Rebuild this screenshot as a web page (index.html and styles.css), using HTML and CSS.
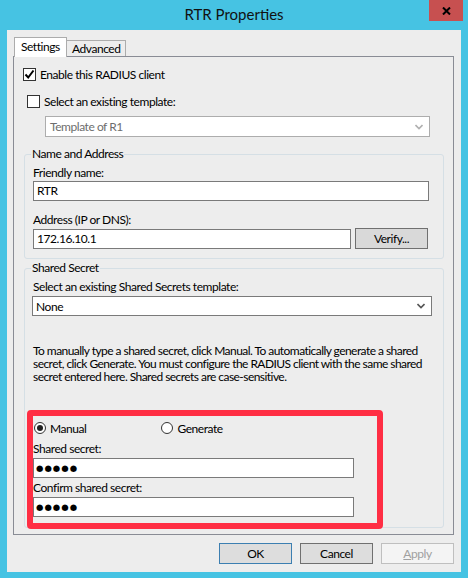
FILE: index.html
```html
<!DOCTYPE html>
<html>
<head>
<meta charset="utf-8">
<title>RTR Properties</title>
<link rel="stylesheet" href="styles.css">
</head>
<body>
<div class="titlebar">
  <div></div>
  <div class="title">RTR Properties</div>
  <div class="close"><svg width="9" height="8" viewBox="0 0 9 8"><path d="M1 0.5 L8 7.5 M8 0.5 L1 7.5" stroke="#000" stroke-width="2"/></svg></div>
</div>
<div class="dialog">
  <div class="tabs">
    <div class="tab active">Settings</div>
    <div class="tab">Advanced</div>
  </div>
  <div class="panel">
    <div class="check row1"><span class="box"><svg width="11" height="11" viewBox="0 0 11 11"><path d="M1.5 5.5 L4.2 8.5 L9.5 1.5" fill="none" stroke="#000" stroke-width="2"/></svg></span><span>Enable this RADIUS client</span></div>
    <div class="check row2"><span class="box"></span><span>Select an existing template:</span></div>
    <div class="select disabled"><span>Template of R1</span><svg width="8" height="6" viewBox="0 0 8 6"><path d="M0.5 1 L4 4.5 L7.5 1" fill="none" stroke="#b0b0b0" stroke-width="1.6"/></svg></div>

    <fieldset class="group g1">
      <legend>Name and Address</legend>
      <div class="lbl first">Friendly name:</div>
      <div class="input full">RTR</div>
      <div class="lbl gap">Address (IP or DNS):</div>
      <div class="addr-row">
        <div class="input addr">172.16.10.1</div>
        <div class="btn verify">Verify...</div>
      </div>
    </fieldset>

    <fieldset class="group g2">
      <legend>Shared Secret</legend>
      <div class="lbl first">Select an existing Shared Secrets template:</div>
      <div class="select none"><span>None</span><svg width="8" height="6" viewBox="0 0 8 6"><path d="M0.5 1 L4 4.5 L7.5 1" fill="none" stroke="#555" stroke-width="1.6"/></svg></div>
      <p class="info">To manually type a shared secret, click Manual. To automatically generate a shared secret, click Generate. You must configure the RADIUS client with the same shared secret entered here. Shared secrets are case-sensitive.</p>
      <div class="secret-area">
        <div class="radios">
          <div class="radio"><span class="circle on"></span><span>Manual</span></div>
          <div class="radio gen"><span class="circle"></span><span>Generate</span></div>
        </div>
        <div class="lbl s1">Shared secret:</div>
        <div class="input pw">●●●●●</div>
        <div class="lbl s2">Confirm shared secret:</div>
        <div class="input pw">●●●●●</div>
        <div class="highlight"></div>
      </div>
    </fieldset>
  </div>
  <div class="buttons">
    <div class="btn default">OK</div>
    <div class="btn">Cancel</div>
    <div class="btn disabled"><u>A</u>pply</div>
  </div>
</div>
</body>
</html>
```
FILE: styles.css
```css
html, body {
  margin: 0;
  padding: 0;
}
body {
  width: 468px;
  height: 578px;
  overflow: hidden;
  background: #46c3e3;
  font-family: Lato, "Open Sans", sans-serif;
  font-size: 12px;
  letter-spacing: -0.45px;
  color: #000;
}
.titlebar {
  height: 30px;
  display: grid;
  grid-template-columns: 1fr auto 1fr;
}
.title {
  font-size: 15px;
  line-height: 28px;
  letter-spacing: 0;
  color: #111;
}
.close {
  justify-self: end;
  align-self: start;
  width: 34px;
  height: 21px;
  margin-right: 5px;
  background: #c75050;
  display: flex;
  align-items: center;
  justify-content: center;
}
.dialog {
  margin: 0 7px;
  height: 542px;
  background: #ededed;
  display: flex;
  flex-direction: column;
}
.tabs {
  display: flex;
  align-items: flex-end;
  height: 19px;
  margin: 7px 0 0 7px;
  position: relative;
  z-index: 1;
}
.tab {
  box-sizing: border-box;
  height: 16px;
  width: 60px;
  border: 1px solid #acacac;
  border-bottom: none;
  padding: 0 5px;
  line-height: 15px;
  background: #ededed;
  margin-left: -1px;
}
.tab.active {
  height: 20px;
  width: 53px;
  margin-left: 0;
  margin-bottom: -1px;
  background: #fff;
  line-height: 18px;
  padding: 0 6px;
}
.panel {
  box-sizing: border-box;
  margin-left: 6px;
  width: 441px;
  height: 479px;
  border: 1px solid #898c95;
  background: #ededed;
  padding: 0 0 0 9px;
}
.check {
  display: flex;
  align-items: center;
  height: 13px;
  gap: 4px;
}
.box {
  box-sizing: border-box;
  width: 13px;
  height: 13px;
  border: 1px solid #333;
  background: #fff;
  display: flex;
  align-items: center;
  justify-content: center;
}
.row1 { margin-top: 11px; }
.row2 { margin-top: 14px; margin-left: 4px; }
.select {
  box-sizing: border-box;
  display: flex;
  align-items: center;
  justify-content: space-between;
  background: #fff;
  padding: 0 6px 0 4px;
}
.select.disabled {
  margin: 8px 0 0 22px;
  width: 385px;
  height: 21px;
  border: 1px solid #adadad;
  color: #6d6d6d;
}
.group {
  box-sizing: border-box;
  margin: 0 0 0 1px;
  width: 420px;
  border: 1px solid #d5dfe5;
  border-radius: 3px;
  padding: 0 8px;
  min-width: 0;
}
.group legend {
  line-height: 14px;
  padding: 0 1px;
  margin-left: -2px;
}
.g1 { margin-top: 10px; height: 112px; }
.g2 { margin-top: 2px; height: 267px; }
.lbl {
  line-height: 16px;
}
.lbl.first { margin-top: 4px; }
.lbl.gap { margin-top: 11px; }
.input {
  box-sizing: border-box;
  height: 20px;
  border: 1px solid #7a7a7a;
  background: #fff;
  line-height: 18px;
  padding: 0 3px;
}
.input.full { width: 396px; }
.addr-row {
  display: flex;
  align-items: flex-end;
  gap: 4px;
  height: 21px;
}
.input.addr { width: 318px; }
.btn {
  box-sizing: border-box;
  width: 73px;
  height: 21px;
  border: 1px solid #707070;
  background: #dddddd;
  text-align: center;
  line-height: 19px;
}
.btn.verify { background: #d9d9d9; }
.select.none {
  margin: 1px 0 0 -1px;
  width: 400px;
  height: 20px;
  border: 1px solid #7a7a7a;
  padding-left: 3px;
}
.info {
  margin: 28px -10px 0 0;
  line-height: 13px;
  letter-spacing: -0.55px;
}
.secret-area {
  position: relative;
  margin-top: 38px;
}
.radios {
  display: flex;
  height: 14px;
  align-items: center;
  margin-left: 1px;
}
.radio {
  display: flex;
  align-items: center;
  gap: 4px;
}
.radio.gen { margin-left: 75px; }
.circle {
  box-sizing: border-box;
  width: 12px;
  height: 12px;
  border: 1px solid #333;
  border-radius: 50%;
  background: #fff;
  display: flex;
  align-items: center;
  justify-content: center;
}
.circle.on::after {
  content: "";
  width: 6px;
  height: 6px;
  border-radius: 50%;
  background: #222;
}
.lbl.s1 { margin-top: 6px; }
.lbl.s2 { margin-top: 2px; }
.input.pw {
  width: 321px;
  margin-top: 1px;
  font-family: "DejaVu Sans", sans-serif;
  font-size: 8.5px;
  letter-spacing: 1px;
  padding-left: 2px;
}
.highlight {
  position: absolute;
  left: -6px;
  top: -11px;
  width: 356px;
  height: 119px;
  box-sizing: border-box;
  border: 6px solid #ff2e44;
  border-radius: 4px;
}
.buttons {
  display: flex;
  justify-content: flex-end;
  gap: 8px;
  margin-top: 8px;
  padding-right: 7px;
}
.btn.default { border-color: #3c7fb1; }
.btn.disabled {
  border-color: #bfbfbf;
  background: #f4f4f4;
  color: #a0a0a0;
}
```
